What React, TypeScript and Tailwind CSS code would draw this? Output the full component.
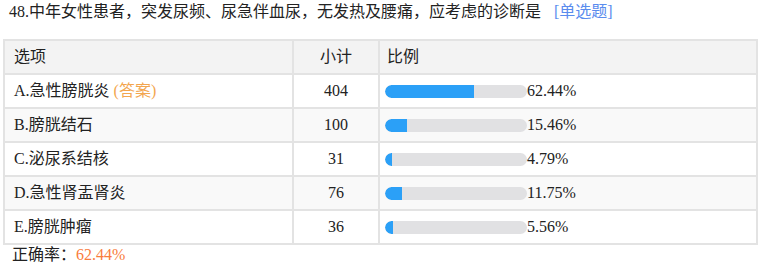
const rows = [
  { label: "A.急性膀胱炎", answer: true, count: 404, pct: 62.44 },
  { label: "B.膀胱结石", answer: false, count: 100, pct: 15.46 },
  { label: "C.泌尿系结核", answer: false, count: 31, pct: 4.79 },
  { label: "D.急性肾盂肾炎", answer: false, count: 76, pct: 11.75 },
  { label: "E.膀胱肿瘤", answer: false, count: 36, pct: 5.56 },
];

function Bar({ pct }: { pct: number }) {
  return (
    <div className="flex items-center">
      <div className="h-[13px] w-[142px] rounded-full bg-[#e1e1e3] overflow-hidden">
        <div className="h-full rounded-l-full bg-[#2ba0f7]" style={{ width: `${pct}%` }} />
      </div>
      <span>{pct.toFixed(2)}%</span>
    </div>
  );
}

export default function App() {
  return (
    <div
      className="w-[762px] h-[263px] bg-white text-[16px] text-[#222] leading-none"
      style={{ fontFamily: '"Liberation Serif", "Noto Sans CJK SC", serif' }}
    >
      <div className="h-[39px] pl-[9px] pt-[4px]">
        48.中年女性患者，突发尿频、尿急伴血尿，无发热及腰痛，应考虑的诊断是
        <span className="ml-[13px] text-[#5a8cee]">[单选题]</span>
      </div>
      <table className="ml-[3px] w-[755px] border-collapse table-fixed">
        <colgroup>
          <col className="w-[289px]" />
          <col className="w-[86px]" />
          <col />
        </colgroup>
        <thead>
          <tr className="h-[34px] bg-[#f3f3f3]">
            <th className="border-2 border-[#e3e3e3] pl-[9px] text-left font-normal">选项</th>
            <th className="border-2 border-[#e3e3e3] text-center font-normal">小计</th>
            <th className="border-2 border-[#e3e3e3] pl-[7px] text-left font-normal">比例</th>
          </tr>
        </thead>
        <tbody>
          {rows.map((r, i) => (
            <tr key={r.label} className={`h-[34px] ${i % 2 === 1 ? "bg-[#f9f9f9]" : "bg-white"}`}>
              <td className="border-2 border-[#e3e3e3] pl-[9px]">
                {r.label}
                {r.answer && <span className="ml-[4px] text-[#f3a64f]">(答案)</span>}
              </td>
              <td className="border-2 border-[#e3e3e3] text-center">{r.count}</td>
              <td className="border-2 border-[#e3e3e3] pl-[5px]">
                <Bar pct={r.pct} />
              </td>
            </tr>
          ))}
        </tbody>
      </table>
      <div className="pl-[12px] pt-[2px]">
        正确率：<span className="text-[#f97c3c]">62.44%</span>
      </div>
    </div>
  );
}
